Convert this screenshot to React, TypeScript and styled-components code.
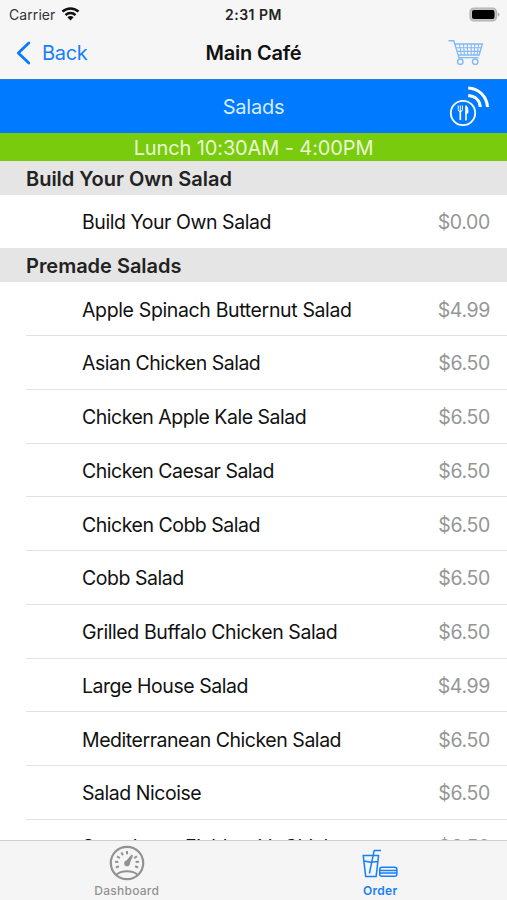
import React from "react";
import styled, { createGlobalStyle } from "styled-components";

const Global = createGlobalStyle`
  * { box-sizing: border-box; }
  body { margin: 0; background: #fff; font-family: Inter, "Liberation Sans", sans-serif; }
`;

const Screen = styled.div`
  width: 507px;
  height: 900px;
  display: flex;
  flex-direction: column;
  overflow: hidden;
  background: #fff;
`;

const StatusBar = styled.div`
  flex: 0 0 27px;
  display: grid;
  grid-template-columns: 1fr auto 1fr;
  align-items: center;
  padding-top: 1px;
  background: #f6f6f6;
`;

const Carrier = styled.div`
  display: flex;
  align-items: center;
  gap: 6px;
  padding-left: 9px;
  font-size: 14px;
  letter-spacing: 0.08px;
  color: #333;
`;

const Clock = styled.div`
  font-size: 14px;
  font-weight: 600;
  letter-spacing: 0.5px;
  color: #222;
`;

const Battery = styled.div`
  display: flex;
  justify-content: flex-end;
  padding-right: 7px;
`;

const NavBar = styled.div`
  flex: 0 0 52px;
  display: grid;
  grid-template-columns: 1fr auto 1fr;
  align-items: center;
  padding-bottom: 1px;
  background: #f6f6f6;
`;

const Back = styled.div`
  display: flex;
  align-items: center;
  gap: 10px;
  padding-left: 16px;
  font-size: 20px;
  letter-spacing: -0.3px;
  color: #1680f8;
`;

const Title = styled.div`
  font-size: 20px;
  font-weight: 600;
  letter-spacing: -0.2px;
  color: #111;
`;

const Cart = styled.div`
  display: flex;
  justify-content: flex-end;
  padding: 0 23px 1px 0;
`;

const CategoryBar = styled.div`
  flex: 0 0 54px;
  display: grid;
  grid-template-columns: 1fr auto 1fr;
  align-items: center;
  border-top: 1px solid #2b79cf;
  background: #007aff;
  color: #d8ebff;
  font-size: 20px;
  letter-spacing: -0.2px;
`;

const CategoryName = styled.div`
  grid-column: 2;
`;

const Beacon = styled.div`
  grid-column: 3;
  display: flex;
  justify-content: flex-end;
  padding-right: 16px;
`;

const MealBar = styled.div`
  flex: 0 0 27.5px;
  display: flex;
  align-items: center;
  justify-content: center;
  padding-top: 3px;
  background: #79cb0d;
  color: #eaf8d5;
  font-size: 20px;
  letter-spacing: -0.12px;
`;

const Menu = styled.div`
  flex: 1 1 0;
  min-height: 0;
  overflow: hidden;
`;

const SectionHeader = styled.div`
  height: 34px;
  display: flex;
  align-items: center;
  padding: 2px 0 0 26px;
  background: #e5e5e5;
  color: #222;
  font-size: 20px;
  font-weight: 600;
  letter-spacing: -0.02px;
`;

const Item = styled.div<{ $last?: boolean }>`
  height: 53.75px;
  margin-left: 26px;
  padding: 2px 17px 0 56px;
  display: flex;
  align-items: center;
  justify-content: space-between;
  border-bottom: 1px solid ${(p) => (p.$last ? "transparent" : "#e2e2e2")};
  white-space: nowrap;
`;

const ItemName = styled.span<{ $track: number }>`
  color: #111;
  font-size: 19.5px;
  letter-spacing: ${(p) => p.$track}px;
`;

const Price = styled.span`
  color: #969696;
  font-size: 19.5px;
  letter-spacing: -0.35px;
`;

const TabBar = styled.div`
  flex: 0 0 60px;
  display: grid;
  grid-template-columns: 1fr 1fr;
  border-top: 1px solid #d0d0d0;
  background: #f5f5f5;
`;

const Tab = styled.div<{ $active?: boolean }>`
  display: flex;
  flex-direction: column;
  align-items: center;
  padding-top: 4px;
  color: ${(p) => (p.$active ? "#1680f8" : "#929292")};
`;

const TabLabel = styled.span<{ $active?: boolean }>`
  margin-top: 2px;
  line-height: 16px;
  font-size: 12px;
  font-weight: ${(p) => (p.$active ? 600 : 500)};
  letter-spacing: 0.25px;
`;

const WifiIcon = () => (
  <svg width="19" height="14" viewBox="0 0 18 14" fill="none" stroke="#111" strokeWidth="2.5">
    <path d="M1 4.7C5.5.3 12.5.3 17 4.7" />
    <path d="M4 8.1C6.8 5.3 11.2 5.3 14 8.1" />
    <path d="M9 13.5L5.9 10.2C7.6 8.7 10.4 8.7 12.1 10.2Z" fill="#111" stroke="none" />
  </svg>
);

const BatteryIcon = () => (
  <svg width="31" height="15" viewBox="0 0 31 15">
    <rect x="1" y="1" width="26.5" height="13" rx="4" fill="#c4c4c4" stroke="#b2b2b2" strokeWidth="1.2" />
    <rect x="3" y="3" width="22.5" height="9" rx="2" fill="#000" />
    <path d="M28.8 5.2Q32.2 7.5 28.8 9.8Z" fill="#aaa" />
  </svg>
);

const BackIcon = () => (
  <svg width="16" height="24" viewBox="0 0 16 24" fill="none" stroke="#0a7aff" strokeWidth="2.8" strokeLinecap="round" strokeLinejoin="round">
    <path d="M12.8 2L2.3 12L12.8 22" />
  </svg>
);

const CartIcon = () => (
  <svg width="36" height="27" viewBox="0 0 36 27" fill="none" stroke="#83b9f4" strokeWidth="1.4">
    <path d="M.5 1.7H5.8L11 18.6H30.5M7 5H34.3L31.2 16H10.1" />
    <path d="M8.2 8.7H33.3M9.2 12.4H32.3M11.5 5L13.3 16M15.4 5L16.5 16M19.3 5L19.7 16M23.2 5V16M27 5L26 16M30.8 5L28.9 16" strokeWidth="1.1" />
    <circle cx="12.3" cy="22.7" r="2.7" />
    <circle cx="27.2" cy="22.7" r="2.7" />
  </svg>
);

const BeaconIcon = () => (
  <svg width="42" height="43" viewBox="0 0 42 43" fill="none" stroke="#fff">
    <circle cx="14" cy="28" r="12.2" strokeWidth="1.8" />
    <path d="M19.2 3C30 3.5 37.8 11.5 38.5 22M19.2 10.5C26.5 11 30.8 15.5 31.3 22" strokeWidth="3.1" />
    <path d="M9.2 20.5V24.8Q9.2 26.5 11.3 26.5Q13.4 26.5 13.4 24.8V20.5M11.3 20.5V26" strokeWidth="1" />
    <path d="M11.3 26V35" strokeWidth="1.7" />
    <path d="M17 20.5V35.5" strokeWidth="1.6" />
    <path d="M17 20.5Q20.1 22 19.2 28.5H17Z" fill="#fff" stroke="none" />
  </svg>
);

const ticks = [-112, -84, -56, -28, 0, 56, 84, 112];

const GaugeIcon = () => (
  <svg width="36" height="36" viewBox="0 0 36 36" fill="none" stroke="currentColor">
    <circle cx="18" cy="18" r="16.2" strokeWidth="2.2" />
    {ticks.map((a) => (
      <path key={a} d="M18 6V9.3" strokeWidth="2" transform={`rotate(${a} 18 18)`} />
    ))}
    <path d="M7.5 29.7C12 25 24 25 28.5 29.7" strokeWidth="2" />
    <path d="M16 17.2L22.6 9.6L24 10.4L20.3 19.5Z" fill="currentColor" stroke="none" />
    <circle cx="18" cy="18.4" r="2.8" fill="currentColor" stroke="none" />
  </svg>
);

const MealIcon = () => (
  <svg width="36" height="36" viewBox="0 0 36 36" fill="none" stroke="currentColor" strokeWidth="1.5" strokeLinejoin="round">
    <path d="M1.2 10.4H16.6L14.1 31.6H3.7ZM2 15.9L8.9 17.2L15.8 16.6" />
    <path d="M19 5.4H12.2L7.4 28.5" />
    <rect x="17.7" y="22.2" width="17.2" height="9" rx="2.3" />
    <path d="M17.7 25.5H34.9M17.7 28H34.9" />
  </svg>
);

type Dish = { name: string; price: string; track: number };

const premade: Dish[] = [
  { name: "Apple Spinach Butternut Salad", price: "$4.99", track: -0.36 },
  { name: "Asian Chicken Salad", price: "$6.50", track: -0.5 },
  { name: "Chicken Apple Kale Salad", price: "$6.50", track: -0.49 },
  { name: "Chicken Caesar Salad", price: "$6.50", track: -0.5 },
  { name: "Chicken Cobb Salad", price: "$6.50", track: -0.48 },
  { name: "Cobb Salad", price: "$6.50", track: -0.47 },
  { name: "Grilled Buffalo Chicken Salad", price: "$6.50", track: -0.4 },
  { name: "Large House Salad", price: "$4.99", track: -0.46 },
  { name: "Mediterranean Chicken Salad", price: "$6.50", track: -0.46 },
  { name: "Salad Nicoise", price: "$6.50", track: -0.46 },
  { name: "Strawberry Fields with Chicken", price: "$6.50", track: -0.46 },
];

export default function App() {
  return (
    <>
      <Global />
      <Screen>
        <StatusBar>
          <Carrier>Carrier <WifiIcon /></Carrier>
          <Clock>2:31 PM</Clock>
          <Battery><BatteryIcon /></Battery>
        </StatusBar>
        <NavBar>
          <Back><BackIcon />Back</Back>
          <Title>Main Café</Title>
          <Cart><CartIcon /></Cart>
        </NavBar>
        <CategoryBar>
          <CategoryName>Salads</CategoryName>
          <Beacon><BeaconIcon /></Beacon>
        </CategoryBar>
        <MealBar>Lunch 10:30AM - 4:00PM</MealBar>
        <Menu>
          <SectionHeader>Build Your Own Salad</SectionHeader>
          <Item $last>
            <ItemName $track={-0.45}>Build Your Own Salad</ItemName>
            <Price>$0.00</Price>
          </Item>
          <SectionHeader>Premade Salads</SectionHeader>
          {premade.map(({ name, price, track }) => (
            <Item key={name}>
              <ItemName $track={track}>{name}</ItemName>
              <Price>{price}</Price>
            </Item>
          ))}
        </Menu>
        <TabBar>
          <Tab>
            <GaugeIcon />
            <TabLabel>Dashboard</TabLabel>
          </Tab>
          <Tab $active>
            <MealIcon />
            <TabLabel $active>Order</TabLabel>
          </Tab>
        </TabBar>
      </Screen>
    </>
  );
}
